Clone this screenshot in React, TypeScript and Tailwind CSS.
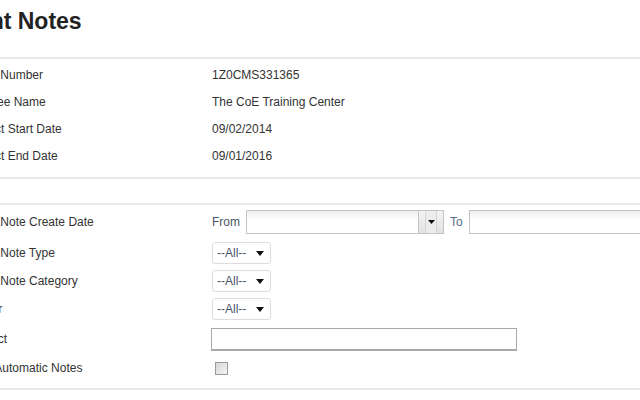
const font = { fontFamily: '"Liberation Sans", Arial, sans-serif' };

const info = [
  { label: 'Grant Number', value: '1Z0CMS331365' },
  { label: 'Grantee Name', value: 'The CoE Training Center' },
  { label: 'Project Start Date', value: '09/02/2014' },
  { label: 'Project End Date', value: '09/01/2016' },
];

function Caret() {
  return (
    <svg width="8" height="5" viewBox="0 0 8 5" className="shrink-0">
      <path d="M0 0h8L4 5z" fill="#111" />
    </svg>
  );
}

function SelectBox() {
  return (
    <div className="flex h-[22px] w-[59px] items-center justify-between rounded-[3px] border border-[#dcdcdc] bg-white pl-[4px] pr-[6px] text-[12px] text-[#4a5568]">
      <span>--All--</span>
      <Caret />
    </div>
  );
}

function DateInput({ width }: { width: string }) {
  return <div className={`h-[24px] ${width} shrink-0 border border-[#c4c4c4] bg-gradient-to-b from-[#eeeeee] to-white to-40%`} />;
}

function FilterRow({ label, height, children }: { label: string; height: string; children: React.ReactNode }) {
  return (
    <div className={`flex ${height} items-center`}>
      <div className="w-[245px] shrink-0 whitespace-nowrap">{label}</div>
      <div className="flex items-center">{children}</div>
    </div>
  );
}

export default function App() {
  return (
    <div className="h-[400px] w-[640px] overflow-hidden bg-white text-[12px] text-[#333]" style={font}>
      <h1 className="-ml-[50px] flex h-[57px] items-start pt-[7px] text-[23px] font-bold leading-[28px] text-[#222]">
        Grant Notes
      </h1>

      <div className="border-t-2 border-[#e8e8e8] pt-[2px] pb-[8px]">
        {info.map((row) => (
          <div key={row.label} className="-ml-[33px] flex h-[27px] items-center">
            <div className="w-[245px] shrink-0 whitespace-nowrap">{row.label}</div>
            <div className="whitespace-nowrap">{row.value}</div>
          </div>
        ))}
      </div>

      <div className="h-[26px] border-t-2 border-[#e8e8e8]" />

      <div className="border-y-2 border-[#e8e8e8] pb-[7px]">
        <div className="-ml-[33px]">
          <FilterRow label="Grant Note Create Date" height="h-[34px]">
            <span className="mr-[6px] text-[#4a5568]">From</span>
            <DateInput width="w-[173px]" />
            <div className="flex h-[24px] w-[25px] shrink-0 items-center justify-center border border-l-0 border-[#c4c4c4] bg-gradient-to-b from-[#f4f4f4] to-[#e2e2e2]">
              <div className="flex h-full w-[12px] items-center justify-center border-x border-[#d6d6d6] bg-[#ececec]">
                <svg width="7" height="4" viewBox="0 0 7 4">
                  <path d="M0 0h7L3.5 4z" fill="#111" />
                </svg>
              </div>
            </div>
            <span className="mx-[6px] text-[#5a6b8c]">To</span>
            <DateInput width="w-[200px]" />
          </FilterRow>
          <FilterRow label="Grant Note Type" height="h-[28px]">
            <SelectBox />
          </FilterRow>
          <FilterRow label="Grant Note Category" height="h-[28px]">
            <SelectBox />
          </FilterRow>
          <FilterRow label="Author" height="h-[28px]">
            <SelectBox />
          </FilterRow>
          <FilterRow label="Subject" height="h-[32px]">
            <div className="-ml-px h-[23px] w-[306px] border border-[#a8a8a8] border-b-2 bg-white" />
          </FilterRow>
          <FilterRow label="Hide Automatic Notes" height="h-[26px]">
            <div className="ml-[3px] h-[13px] w-[13px] border border-[#9a9a9a] bg-gradient-to-br from-[#d8d8d8] to-[#f4f4f4]" />
          </FilterRow>
        </div>
      </div>
    </div>
  );
}
